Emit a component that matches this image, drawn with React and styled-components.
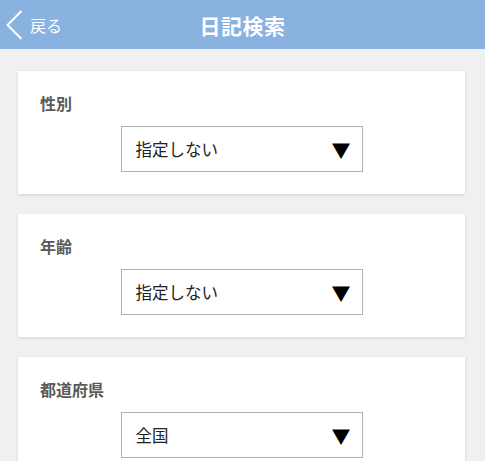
import React from 'react';
import styled, { createGlobalStyle } from 'styled-components';

const GlobalStyle = createGlobalStyle`
  html, body {
    margin: 0;
    padding: 0;
    background: #f0f0f0;
    font-family: "Noto Sans CJK JP", "Noto Sans", sans-serif;
  }
`;

const Page = styled.div`
  width: 485px;
  min-height: 461px;
  background: #f0f0f0;
`;

const Header = styled.header`
  position: relative;
  height: 49px;
  background: #8ab2e1;
  display: flex;
  align-items: center;
  justify-content: center;
`;

const BackButton = styled.button`
  position: absolute;
  left: 5px;
  top: 0;
  height: 49px;
  display: flex;
  align-items: center;
  gap: 7px;
  padding: 0;
  background: none;
  border: none;
  color: #fff;
  font-family: inherit;
  font-size: 16px;
  cursor: pointer;
`;

const Title = styled.h1`
  margin: 0;
  color: #fff;
  font-size: 21px;
  font-weight: 700;
  letter-spacing: 0.5px;
`;

const Content = styled.main`
  display: flex;
  flex-direction: column;
  gap: 20px;
  padding: 22px 20px 0 18px;
`;

const Card = styled.section`
  background: #fff;
  box-shadow: 0 1px 3px rgba(0, 0, 0, 0.12);
  padding: 21px 22px 22px;
  display: flex;
  flex-direction: column;
`;

const Label = styled.div`
  color: #5a5a5a;
  font-size: 16px;
  font-weight: 700;
  line-height: 22px;
  margin-bottom: 12px;
`;

const Select = styled.div`
  align-self: center;
  box-sizing: border-box;
  width: 242px;
  height: 46px;
  border: 1px solid #b0b0b0;
  display: flex;
  align-items: center;
  justify-content: space-between;
  padding: 0 11px 0 14px;
  color: #222;
  font-size: 16.5px;
`;

const Arrow = styled.span`
  font-size: 19px;
  color: #000;
  line-height: 1;
`;

const fields = [
  { label: '性別', value: '指定しない' },
  { label: '年齢', value: '指定しない' },
  { label: '都道府県', value: '全国' },
];

export default function App() {
  return (
    <Page>
      <GlobalStyle />
      <Header>
        <BackButton>
          <svg width="18" height="30" viewBox="0 0 18 30">
            <path d="M16.5 1 L2.5 15 L16.5 29" fill="none" stroke="#fff" strokeWidth="2" />
          </svg>
          戻る
        </BackButton>
        <Title>日記検索</Title>
      </Header>
      <Content>
        {fields.map((f) => (
          <Card key={f.label}>
            <Label>{f.label}</Label>
            <Select>
              <span>{f.value}</span>
              <Arrow>▼</Arrow>
            </Select>
          </Card>
        ))}
      </Content>
    </Page>
  );
}
